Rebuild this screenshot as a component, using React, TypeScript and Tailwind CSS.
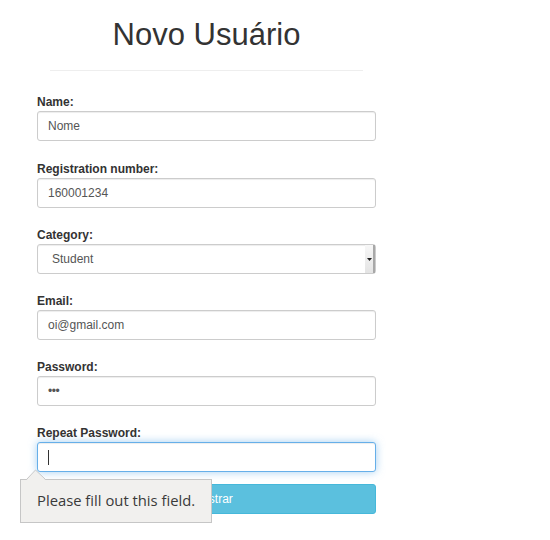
import React from "react";

const Field = ({
  label,
  children,
  mb,
}: {
  label: string;
  children: React.ReactNode;
  mb: string;
}) => (
  <div className={mb}>
    <div className="text-[12px] leading-[17px] font-bold text-[#333]">{label}</div>
    {children}
  </div>
);

const boxCls =
  "h-[30px] w-full border border-[#ccc] rounded-[3px] bg-white flex items-center text-[12px] text-[#555] shadow-[inset_0_1px_1px_rgba(0,0,0,0.075)]";

export default function App() {
  return (
    <div className="relative w-[550px] h-[540px] bg-white font-['Liberation_Sans',Arial,sans-serif] text-[#333]">
      <div className="pl-[37px] w-[376px] pt-[15px]">
        <h1 className="text-[31px] leading-[40px] text-center font-normal text-[#333]">
          Novo Usuário
        </h1>
        <hr className="mx-[13px] mt-[15px] border-t border-[#eee]" />
        <div className="mt-[23px] flex flex-col">
          <Field label="Name:" mb="mb-[20px]">
            <div className={`${boxCls} pl-[10px]`}>Nome</div>
          </Field>
          <Field label="Registration number:" mb="mb-[19px]">
            <div className={`${boxCls} pl-[10px]`}>160001234</div>
          </Field>
          <Field label="Category:" mb="mb-[19px]">
            <div className={`${boxCls} pl-[14px] relative`}>
              Student
              <div className="absolute right-0 top-0 bottom-0 w-[10px] bg-gradient-to-b from-[#f7f7f7] to-[#e4e4e4] border-r-2 border-[#a8a8a8] flex items-center justify-center">
                <svg width="5" height="3" viewBox="0 0 5 3">
                  <polygon points="0,0 5,0 2.5,3" fill="#222" />
                </svg>
              </div>
            </div>
          </Field>
          <Field label="Email:" mb="mb-[19px]">
            <div className={`${boxCls} pl-[10px]`}>oi@gmail.com</div>
          </Field>
          <Field label="Password:" mb="mb-[19px]">
            <div className={`${boxCls} pl-[10px] text-[10px] tracking-[-0.5px]`}>•••</div>
          </Field>
          <Field label="Repeat Password:" mb="mb-[12px]">
            <div className="h-[30px] w-full border border-[#66afe9] rounded-[3px] bg-white flex items-center pl-[10px] shadow-[inset_0_1px_1px_rgba(0,0,0,0.075),0_0_8px_rgba(102,175,233,0.6)]">
              <div className="w-px h-[15px] bg-[#333]" />
            </div>
          </Field>
          <div className="h-[30px] w-full bg-[#5bc0de] border border-[#46b8da] rounded-[3px] flex items-center justify-center text-white text-[12px]">
            Cadastrar
          </div>
        </div>
      </div>

      <div className="absolute left-[20px] top-[479px] w-[192px] h-[44px] bg-[#f1f0ee] border border-[#c6c6c6] flex items-center pl-[16px] pb-[2px] font-['Open_Sans','Noto_Sans',sans-serif] text-[14.8px] text-[#3a3a3a]">
        Please fill out this field.
      </div>
      <svg
        className="absolute left-[26px] top-[469px]"
        width="20"
        height="12"
        viewBox="0 0 20 12"
      >
        <polygon points="0.5,11 9.5,1.5 19.5,11" fill="#f1f0ee" />
        <polyline points="0.5,10.5 9.5,1 19.5,10.5" fill="none" stroke="#c6c6c6" strokeWidth="1" />
      </svg>
    </div>
  );
}
